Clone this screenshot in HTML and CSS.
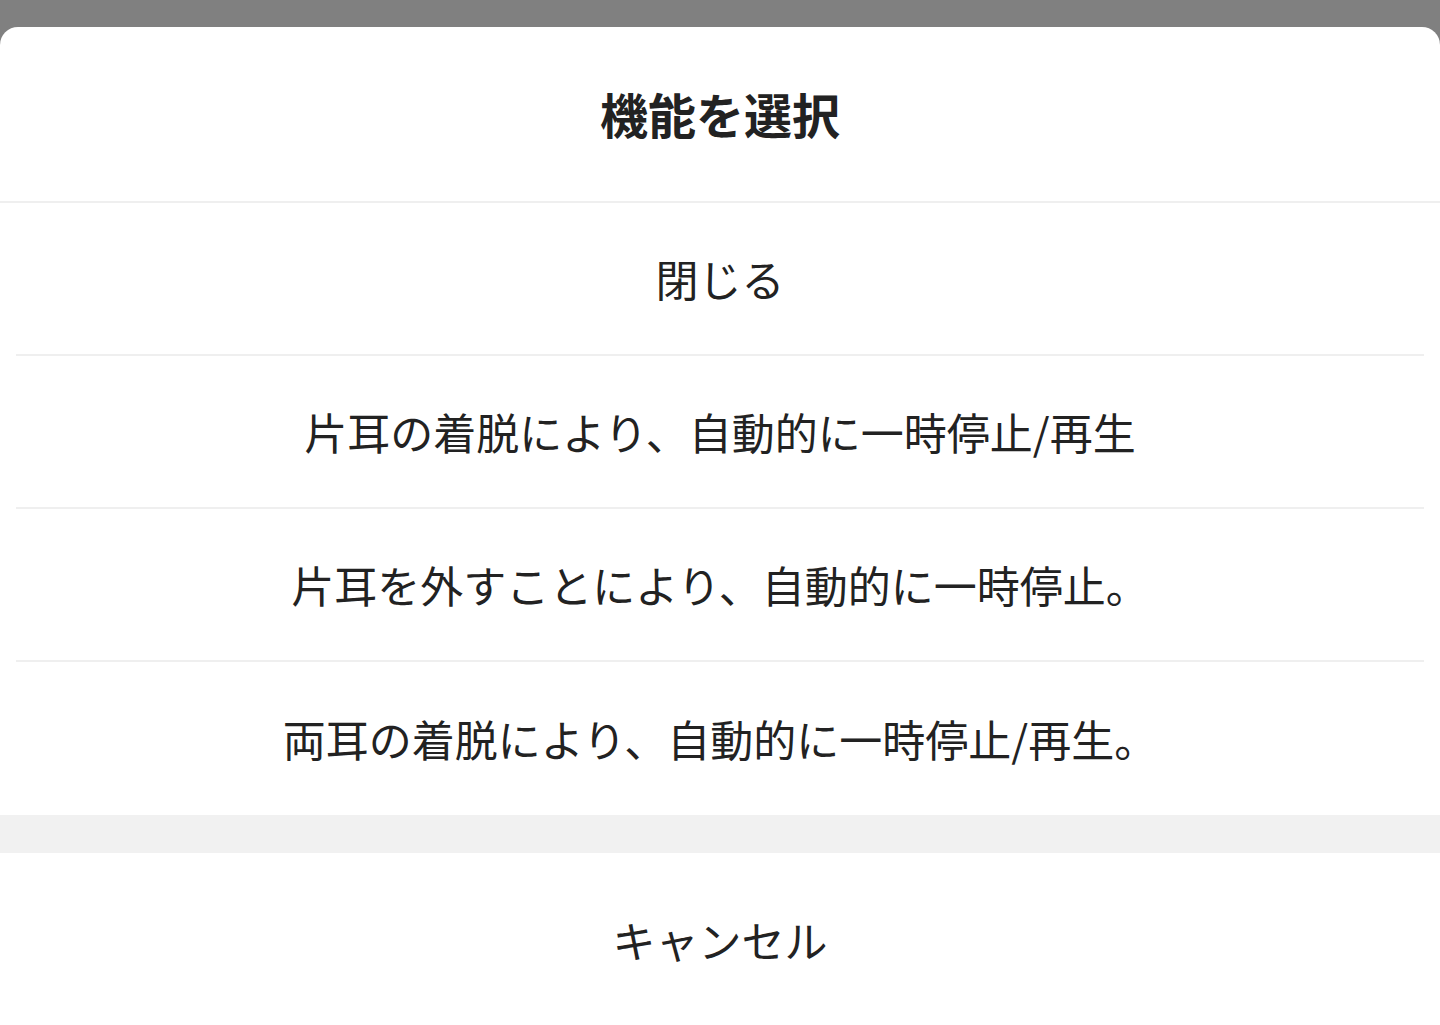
FILE: index.html
```html
<!DOCTYPE html>
<html lang="ja">
<head>
<meta charset="utf-8">
<link rel="stylesheet" href="styles.css">
</head>
<body>
<div class="backdrop"></div>
<div class="sheet">
  <div class="title">機能を選択</div>
  <div class="options">
    <div class="option">閉じる</div>
    <div class="option">片耳の着脱により、自動的に一時停止/再生</div>
    <div class="option">片耳を外すことにより、自動的に一時停止。</div>
    <div class="option">両耳の着脱により、自動的に一時停止/再生。</div>
  </div>
  <div class="spacer"></div>
  <div class="cancel">キャンセル</div>
</div>
</body>
</html>
```

FILE: styles.css
```css
html, body {
  margin: 0;
  padding: 0;
  height: 100%;
  overflow: hidden;
}
body {
  background: #808080;
  font-family: "Noto Sans CJK JP", "Noto Sans", sans-serif;
  color: #222222;
  display: flex;
  flex-direction: column;
}
.backdrop {
  height: 27px;
  flex: none;
}
.sheet {
  flex: 1;
  background: #ffffff;
  border-radius: 18px 18px 0 0;
  display: flex;
  flex-direction: column;
}
.title {
  height: 176px;
  display: flex;
  align-items: center;
  justify-content: center;
  font-size: 48px;
  font-weight: 700;
  padding-bottom: 3px;
  box-sizing: border-box;
  border-bottom: 2px solid #efefef;
}
.options {
  display: flex;
  flex-direction: column;
}
.option {
  height: 153px;
  margin: 0 16px;
  display: flex;
  align-items: center;
  justify-content: center;
  font-size: 43px;
  padding-bottom: 1px;
  box-sizing: border-box;
  border-bottom: 2px solid #efefef;
}
.option:last-child {
  border-bottom: none;
  height: 153px;
}
.spacer {
  height: 38px;
  background: #f1f1f1;
}
.cancel {
  height: 172px;
  display: flex;
  align-items: center;
  justify-content: center;
  font-size: 43px;
  box-sizing: border-box;
}
```
